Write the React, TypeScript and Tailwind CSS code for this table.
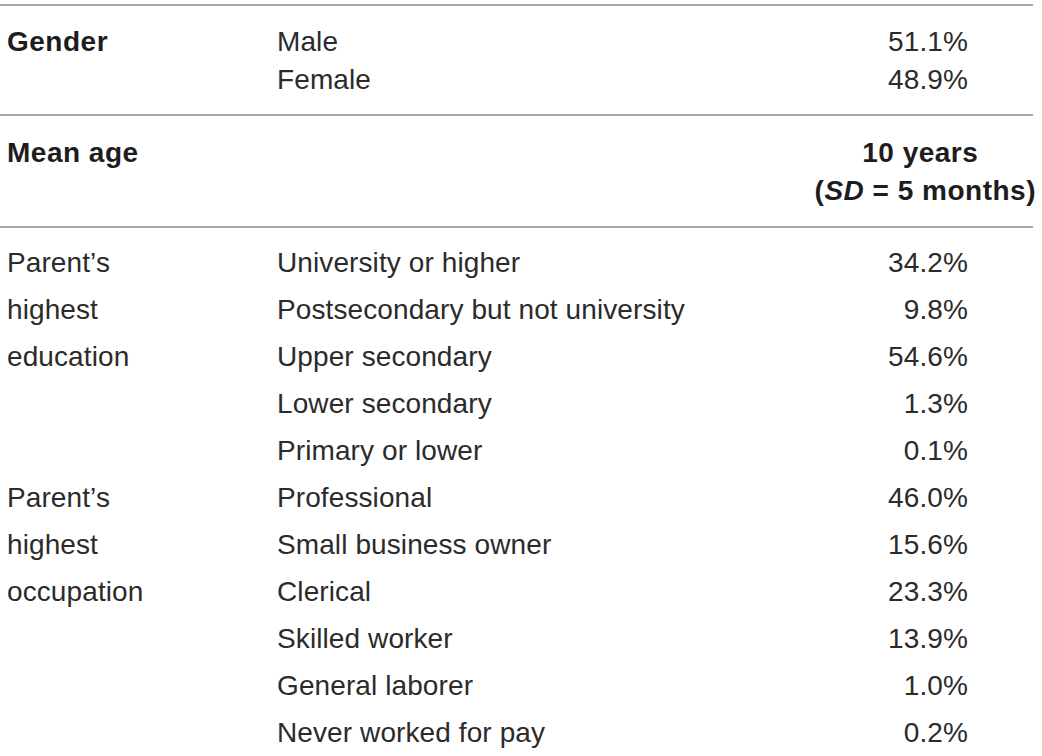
const education = [
  ["University or higher", "34.2%"],
  ["Postsecondary but not university", "9.8%"],
  ["Upper secondary", "54.6%"],
  ["Lower secondary", "1.3%"],
  ["Primary or lower", "0.1%"],
];

const occupation = [
  ["Professional", "46.0%"],
  ["Small business owner", "15.6%"],
  ["Clerical", "23.3%"],
  ["Skilled worker", "13.9%"],
  ["General laborer", "1.0%"],
  ["Never worked for pay", "0.2%"],
];

function Row({
  label,
  item,
  value,
  tall,
  boldLabel,
}: {
  label?: string;
  item: string;
  value: string;
  tall?: boolean;
  boldLabel?: boolean;
}) {
  return (
    <div
      className={`flex ${tall ? "leading-[47px]" : "leading-[38px]"} whitespace-nowrap`}
    >
      <div
        className={`w-[277px] pl-[7px] ${boldLabel ? "font-bold tracking-[0.5px] text-[#1f1c1d]" : ""}`}
      >
        {label}
      </div>
      <div className="flex-1">{item}</div>
      <div className="w-[200px] pr-[65px] text-right">{value}</div>
    </div>
  );
}

export default function App() {
  const eduLabels = ["Parent’s", "highest", "education"];
  const occLabels = ["Parent’s", "highest", "occupation"];

  return (
    <div
      className="w-[1042px] h-[756px] bg-white text-[#2b2b2b] text-[28px] tracking-[0.1px] overflow-hidden"
      style={{ fontFamily: '"Liberation Sans", Arial, sans-serif' }}
    >
      <div className="w-[1033px] pt-[4px]">
        <div className="border-t-2 border-[#a7a7a7] pt-[17px] pb-[15px]">
          <Row label="Gender" boldLabel item="Male" value="51.1%" />
          <Row item="Female" value="48.9%" />
        </div>

        <div className="border-t-2 border-[#a7a7a7] pt-[18px] pb-[16px]">
          <div className="flex leading-[38px] whitespace-nowrap font-bold tracking-[0.5px] text-[#1f1c1d]">
            <div className="w-[277px] pl-[7px]">Mean age</div>
            <div className="flex-1" />
            <div className="-mr-[3px] text-center">
              <div className="pr-[10px]">10 years</div>
              <div>
                (<span className="italic">SD</span> = 5 months)
              </div>
            </div>
          </div>
        </div>

        <div className="border-t-2 border-[#a7a7a7] pt-[11px]">
          {education.map(([item, value], i) => (
            <Row key={item} tall label={eduLabels[i]} item={item} value={value} />
          ))}
          {occupation.map(([item, value], i) => (
            <Row key={item} tall label={occLabels[i]} item={item} value={value} />
          ))}
        </div>
      </div>
    </div>
  );
}
